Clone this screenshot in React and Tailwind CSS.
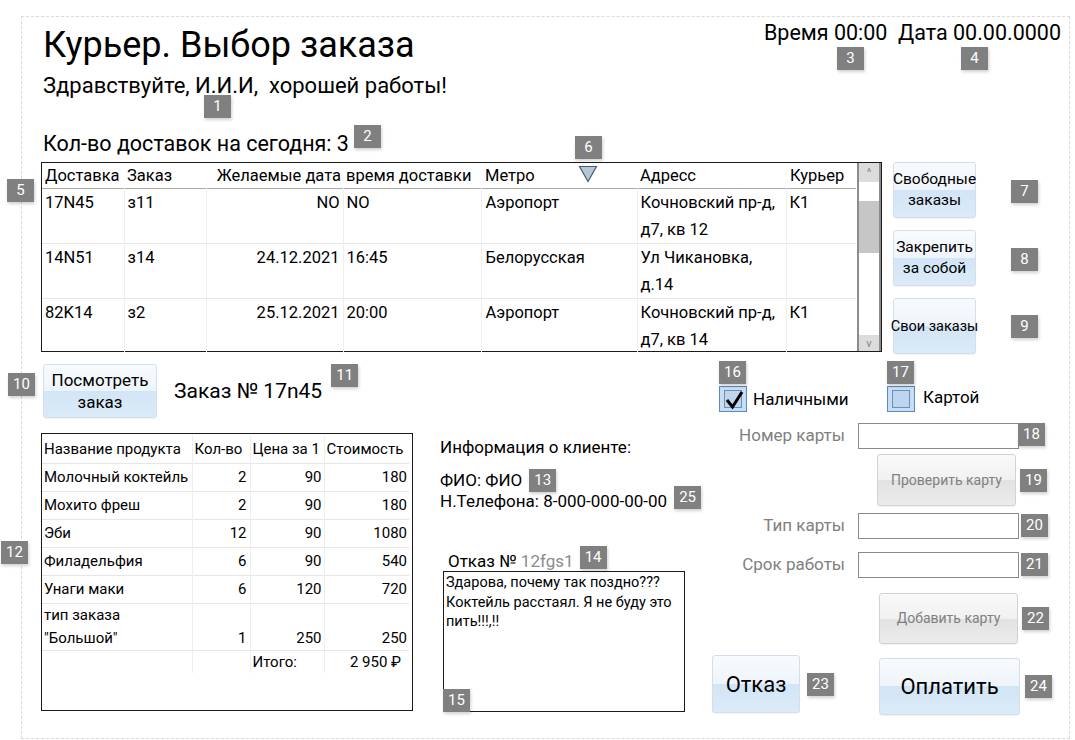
import React from 'react'

const deliveries = [
  { id: '17N45', order: 'з11', date: 'NO', time: 'NO', metro: 'Аэропорт', addr: ['Кочновский пр-д,', 'д7, кв 12'], courier: 'К1' },
  { id: '14N51', order: 'з14', date: '24.12.2021', time: '16:45', metro: 'Белорусская', addr: ['Ул Чикановка,', 'д.14'], courier: '' },
  { id: '82K14', order: 'з2', date: '25.12.2021', time: '20:00', metro: 'Аэропорт', addr: ['Кочновский пр-д,', 'д7, кв 14'], courier: 'К1' },
]

const products = [
  { name: 'Молочный коктейль', qty: 2, price: 90, sum: 180 },
  { name: 'Мохито фреш', qty: 2, price: 90, sum: 180 },
  { name: 'Эби', qty: 12, price: 90, sum: 1080 },
  { name: 'Филадельфия', qty: 6, price: 90, sum: 540 },
  { name: 'Унаги маки', qty: 6, price: 120, sum: 720 },
]

function Badge({ n, className = '' }) {
  return (
    <span
      className={`absolute z-10 flex h-[23px] w-[27px] items-center justify-center bg-[#808080] text-[15px] leading-none text-white shadow-[1px_2px_3px_rgba(0,0,0,0.18)] ${className}`}
    >
      {n}
    </span>
  )
}

function BlueButton({ children, className = '' }) {
  return (
    <div
      className={`relative flex flex-col items-center justify-center whitespace-nowrap rounded-[3px] border border-[#d3dfea] bg-[linear-gradient(to_bottom,#f8fbfd_0%,#edf4fa_50%,#d2e5f6_50%,#dbeaf8_100%)] text-center text-black shadow-[0_1px_1px_rgba(0,0,0,0.06)] ${className}`}
    >
      {children}
    </div>
  )
}

function GrayButton({ children, className = '' }) {
  return (
    <div
      className={`relative flex items-center justify-center rounded-[3px] border border-[#d2d2d2] bg-[linear-gradient(to_bottom,#f9f9f9_0%,#f1f1f1_50%,#e2e2e2_50%,#ebebeb_100%)] text-[14px] text-[#808080] shadow-[0_1px_1px_rgba(0,0,0,0.06)] ${className}`}
    >
      {children}
    </div>
  )
}

function Checkbox({ checked }) {
  return (
    <span className="relative flex h-[26px] w-[28px] items-center justify-center border border-[#5b8ac2] bg-[#c7ddf2]">
      <span className="h-[18px] w-[18px] border border-[#6f8fb4] bg-[#bdd5ee]" />
      {checked && (
        <svg className="absolute left-[5px] top-[3px]" width="19" height="20" viewBox="0 0 19 20">
          <path d="M2 10 L7.5 17 L17 2" fill="none" stroke="#000" strokeWidth="3" strokeLinejoin="miter" />
        </svg>
      )}
    </span>
  )
}

function Field({ label, n, badgeClass = '', labelClass = '', className = '' }) {
  return (
    <div className={`flex items-center ${className}`}>
      <span className={`w-[133px] text-right text-[17px] text-[#7f7f7f] ${labelClass}`}>{label}</span>
      <span className="relative ml-[13px] h-[26px] w-[161px] border border-[#8a8a8a] bg-white">
        <Badge n={n} className={badgeClass} />
      </span>
    </div>
  )
}

export default function App() {
  return (
    <div className="h-[740px] w-[1075px] overflow-hidden bg-white pl-[21px] pt-[16px] font-['Roboto',sans-serif] text-black">
      <div className="relative h-[723px] w-[1049px] border border-dashed border-[#dadada] pl-[19px]">
        {/* header */}
        <div className="flex justify-between">
          <div className="pl-[2px]">
            <h1 className="mt-[8px] text-[36px] leading-[40px] font-normal">Курьер. Выбор заказа</h1>
            <p className="relative mt-[9px] text-[22px] leading-[24px]">
              Здравствуйте, И.И.И,&nbsp; хорошей работы!
              <Badge n="1" className="left-[161px] top-[21px]" />
            </p>
            <p className="mt-[34px] text-[21.5px] leading-[24px]">
              <span className="relative">
                Кол-во доставок на сегодня: 3
                <Badge n="2" className="left-[calc(100%+5px)] top-[-6px]" />
              </span>
            </p>
          </div>
          <div className="relative mr-[8px] mt-[3px] h-[26px] text-[21.5px] leading-[26px] whitespace-pre">
            {'Время 00:00  Дата 00.00.0000'}
            <Badge n="3" className="right-[197px] top-[27px]" />
            <Badge n="4" className="right-[73px] top-[27px]" />
          </div>
        </div>

        {/* deliveries */}
        <div className="mt-[6px] flex">
          <div className="relative flex h-[190px] w-[841px] border border-[#1a1a1a]">
            <Badge n="5" className="left-[-35px] top-[16px]" />
            <Badge n="6" className="left-[533px] top-[-27px]" />
            <table className="w-[814px] table-fixed border-collapse text-[16.5px]">
              <colgroup>
                <col className="w-[82px]" />
                <col className="w-[82px]" />
                <col className="w-[137px]" />
                <col className="w-[138px]" />
                <col className="w-[156px]" />
                <col className="w-[149px]" />
                <col className="w-[70px]" />
              </colgroup>
              <thead>
                <tr className="h-[25px] border-b border-[#a8a8a8] text-left leading-[25px]">
                  <th className="px-[3px] font-normal">Доставка</th>
                  <th className="px-[3px] font-normal">Заказ</th>
                  <th className="px-[2px] text-right font-normal whitespace-nowrap">Желаемые дата</th>
                  <th className="px-[3px] font-normal whitespace-nowrap">время доставки</th>
                  <th className="relative px-[4px] font-normal">
                    Метро
                    <svg className="absolute left-[97px] top-[2px]" width="20" height="18" viewBox="0 0 20 18">
                      <path d="M1.5 1.5 H18.5 L10 16.5 Z" fill="#b7c6d6" stroke="#4d5d6e" strokeWidth="1.2" />
                    </svg>
                  </th>
                  <th className="px-[3px] font-normal">Адресс</th>
                  <th className="px-[4px] font-normal">Курьер</th>
                </tr>
              </thead>
              <tbody className="leading-[27px]">
                {deliveries.map((d, i) => (
                  <tr key={d.id} className={`h-[54px] align-top ${i < 2 ? 'border-b border-[#e8e8e8]' : ''}`}>
                    <td className="px-[3px]">{d.id}</td>
                    <td className="border-l border-[#efefef] px-[3px]">{d.order}</td>
                    <td className="border-l border-[#efefef] px-[3px] text-right">{d.date}</td>
                    <td className="border-l border-[#efefef] px-[3px]">{d.time}</td>
                    <td className="border-l border-[#efefef] px-[4px]">{d.metro}</td>
                    <td className="border-l border-[#efefef] px-[3px] whitespace-nowrap">
                      {d.addr[0]}
                      <br />
                      {d.addr[1]}
                    </td>
                    <td className="border-l border-[#efefef] px-[3px]">{d.courier}</td>
                  </tr>
                ))}
              </tbody>
            </table>
            <div className="ml-auto flex w-[24px] flex-col border-x-2 border-[#8c8c8c] bg-white text-[11px] leading-none text-[#8a8a8a]">
              <div className="flex h-[19px] items-center justify-center bg-[#dcdcdc]">^</div>
              <div className="h-[19px]" />
              <div className="h-[52px] bg-[#c6c6c6]" />
              <div className="flex-1" />
              <div className="flex h-[16px] items-center justify-center bg-[#dcdcdc]">v</div>
            </div>
          </div>

          <div className="ml-[11px] flex flex-col gap-[12px] text-[15.5px] leading-[21px]">
            <BlueButton className="h-[56px] w-[83px]">
              <span>Свободные</span>
              <span>заказы</span>
              <Badge n="7" className="left-[117px] top-[17px]" />
            </BlueButton>
            <BlueButton className="h-[56px] w-[83px]">
              <span>Закрепить</span>
              <span>за собой</span>
              <Badge n="8" className="left-[117px] top-[17px]" />
            </BlueButton>
            <BlueButton className="h-[56px] w-[83px] text-[14.5px]">
              <span>Свои заказы</span>
              <Badge n="9" className="left-[117px] top-[16px]" />
            </BlueButton>
          </div>
        </div>

        {/* lower */}
        <div className="mt-[6px] flex">
          {/* order products */}
          <div className="w-[372px]">
            <div className="mt-[4px] flex items-center">
              <BlueButton className="ml-[2px] h-[54px] w-[114px] text-[17px] leading-[22px]">
                <span>Посмотреть</span>
                <span>заказ</span>
                <Badge n="10" className="left-[-36px] top-[8px]" />
              </BlueButton>
              <span className="relative ml-[17px] text-[21px] leading-[26px]">
                Заказ № 17n45
                <Badge n="11" className="left-[calc(100%+9px)] top-[-14px]" />
              </span>
            </div>
            <div className="relative mt-[15px] h-[278px] w-[372px] border border-[#1a1a1a] pt-[2px]">
              <Badge n="12" className="left-[-41px] top-[107px]" />
              <table className="w-[367px] table-fixed border-collapse text-[15px]">
                <colgroup>
                  <col className="w-[150px]" />
                  <col className="w-[58px]" />
                  <col className="w-[74px]" />
                  <col className="w-[85px]" />
                </colgroup>
                <tbody>
                  <tr className="h-[27px] border-b border-[#e6e6e6]">
                    <td className="px-[2px]">Название продукта</td>
                    <td className="border-l border-[#eeeeee] px-[2px]">Кол-во</td>
                    <td className="border-l border-[#eeeeee] px-[2px]">Цена за 1</td>
                    <td className="border-l border-[#eeeeee] px-[2px]">Стоимость</td>
                  </tr>
                  {products.map((p) => (
                    <tr key={p.name} className="h-[28px] border-b border-[#e6e6e6]">
                      <td className="px-[2px] whitespace-nowrap">{p.name}</td>
                      <td className="border-l border-[#eeeeee] px-[3px] text-right">{p.qty}</td>
                      <td className="border-l border-[#eeeeee] px-[2px] text-right">{p.price}</td>
                      <td className="border-l border-[#eeeeee] px-[2px] text-right">{p.sum}</td>
                    </tr>
                  ))}
                  <tr className="h-[44px] border-b border-[#e6e6e6] align-bottom leading-[23px]">
                    <td className="px-[2px]">
                      тип заказа
                      <br />
                      "Большой"
                    </td>
                    <td className="border-l border-[#eeeeee] px-[3px] text-right">1</td>
                    <td className="border-l border-[#eeeeee] px-[2px] text-right">250</td>
                    <td className="border-l border-[#eeeeee] px-[2px] text-right">250</td>
                  </tr>
                  <tr className="h-[22px]">
                    <td className="px-[2px]" />
                    <td className="border-l border-[#eeeeee]" />
                    <td className="border-l border-[#eeeeee] px-[2px]">Итого:</td>
                    <td className="border-l border-[#eeeeee] pr-[8px] text-right">2 950 ₽</td>
                  </tr>
                </tbody>
              </table>
            </div>
          </div>

          {/* client info */}
          <div className="ml-[27px] w-[272px] text-[17px]">
            <p className="mt-[76px] leading-[22px]">Информация о клиенте:</p>
            <p className="mt-[11px] leading-[22px]">
              <span className="relative">
                ФИО: ФИО
                <Badge n="13" className="left-[calc(100%+7px)] top-[-1px]" />
              </span>
            </p>
            <p className="leading-[21px]">
              <span className="relative">
                Н.Телефона: 8-000-000-00-00
                <Badge n="25" className="left-[calc(100%+7px)] top-[-5px]" />
              </span>
            </p>
            <p className="ml-[8px] mt-[39px] leading-[20px]">
              <span className="relative">
                Отказ № <span className="text-[#8c8c8c]">12fgs1</span>
                <Badge n="14" className="left-[calc(100%+6px)] top-[-5px]" />
              </span>
            </p>
            <div className="relative ml-[3px] h-[141px] w-[242px] border border-[#1a1a1a] px-[2px] pt-[1px] text-[14.5px] leading-[19.5px]">
              Здарова, почему так поздно??? Коктейль расстаял. Я не буду это пить!!!,!!
              <Badge n="15" className="bottom-[-1px] left-[-1px]" />
            </div>
          </div>

          {/* payment */}
          <div className="w-[341px]">
            <div className="mt-[26px] flex h-[26px] items-center text-[17px]">
              <div className="ml-[7px] flex w-[168px] items-center">
                <span className="relative">
                  <Checkbox checked />
                  <Badge n="16" className="left-0 top-[-25px]" />
                </span>
                <span className="ml-[6px] mt-[2px]">Наличными</span>
              </div>
              <div className="flex items-center">
                <span className="relative">
                  <Checkbox />
                  <Badge n="17" className="left-0 top-[-25px]" />
                </span>
                <span className="ml-[8px] mt-[-3px]">Картой</span>
              </div>
            </div>

            <Field label="Номер карты" n="18" className="mt-[11px]" badgeClass="left-[calc(100%)] top-[-1px] !h-[23px]" />
            <GrayButton className="ml-[165px] mt-[5px] h-[52px] w-[139px]">
              Проверить карту
              <Badge n="19" className="left-[142px] top-[14px]" />
            </GrayButton>
            <Field label="Тип карты" n="20" className="mt-[7px]" badgeClass="left-[calc(100%+3px)] top-0" />
            <Field label="Срок работы" n="21" className="mt-[13px]" labelClass="pl-[2px]" badgeClass="left-[calc(100%+3px)] top-0" />
            <GrayButton className="ml-[167px] mt-[15px] h-[51px] w-[139px]">
              Добавить карту
              <Badge n="22" className="left-[142px] top-[13px]" />
            </GrayButton>

            <div className="mt-[11px] flex items-start text-[22px]">
              <BlueButton className="h-[58px] w-[88px]">
                Отказ
                <Badge n="23" className="left-[94px] top-[17px]" />
              </BlueButton>
              <BlueButton className="ml-[79px] mt-[3px] h-[57px] w-[141px]">
                Оплатить
                <Badge n="24" className="left-[145px] top-[16px]" />
              </BlueButton>
            </div>
          </div>
        </div>
      </div>
    </div>
  )
}
